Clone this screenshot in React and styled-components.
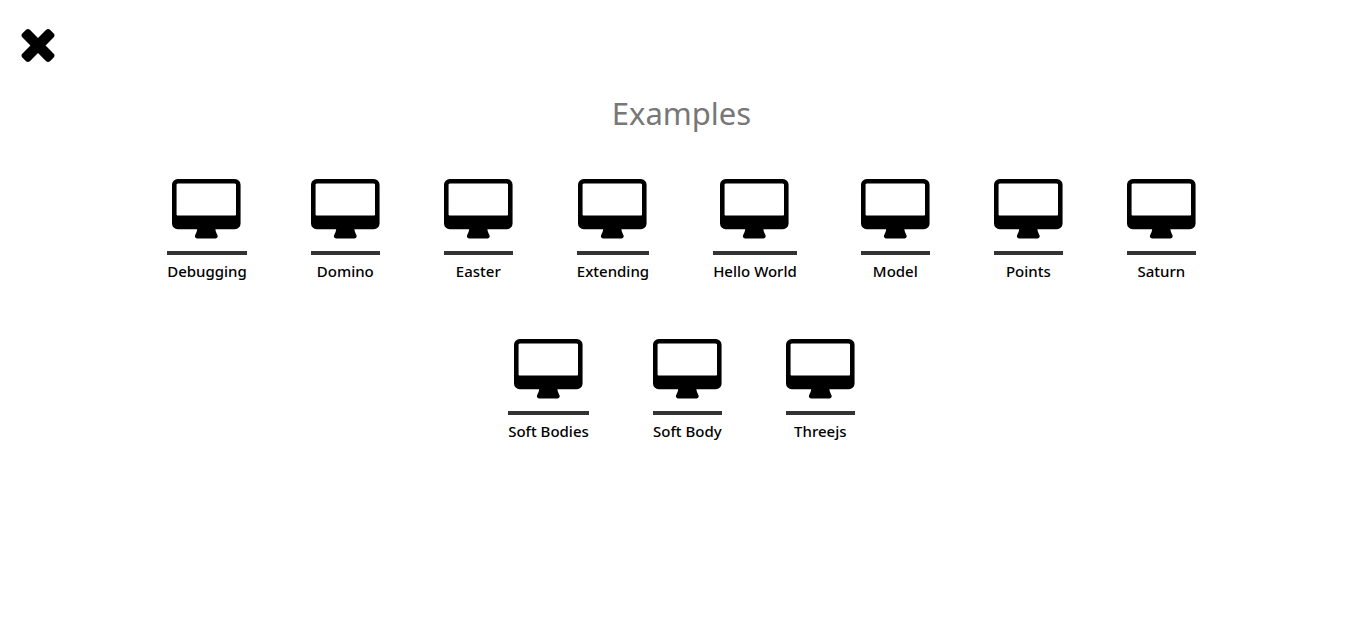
import React from 'react';
import styled, { createGlobalStyle } from 'styled-components';

const examples = [
  'Debugging',
  'Domino',
  'Easter',
  'Extending',
  'Hello World',
  'Model',
  'Points',
  'Saturn',
  'Soft Bodies',
  'Soft Body',
  'Threejs',
];

const GlobalStyle = createGlobalStyle`
  *, *::before, *::after { box-sizing: border-box; }
  body {
    margin: 0;
    background: #fff;
    color: #000;
    font-family: "Noto Sans", "Open Sans", sans-serif;
  }
`;

const Header = styled.header`
  display: flex;
  padding: 29px 21px 0;
`;

const CloseButton = styled.button`
  display: flex;
  padding: 0;
  border: 0;
  background: none;
  color: inherit;
  cursor: pointer;
`;

const CloseIcon = styled.svg`
  width: 34px;
  height: 33px;
  fill: currentColor;
`;

const Title = styled.h1`
  margin: 31px 0 46px;
  color: #777;
  font-size: 31px;
  font-weight: 400;
  line-height: 40px;
  text-align: center;
`;

const Gallery = styled.ul`
  display: flex;
  flex-wrap: wrap;
  justify-content: center;
  gap: 56px 64px;
  max-width: 1120px;
  margin: 0 auto;
  padding: 0 0 56px;
  list-style: none;
`;

const ExampleLink = styled.a`
  display: flex;
  flex-direction: column;
  align-items: center;
  color: inherit;
  text-decoration: none;
`;

const DesktopIcon = styled.svg`
  width: 69px;
  height: 60px;
  fill: currentColor;
`;

const Label = styled.span`
  align-self: stretch;
  margin-top: 12px;
  padding-top: 4px;
  border-top: 4px solid #333;
  font-size: 15px;
  font-weight: 500;
  line-height: 24px;
  text-align: center;
  white-space: nowrap;
`;

function Example({ name }) {
  return (
    <li>
      <ExampleLink href={`#${name.toLowerCase().replace(' ', '-')}`}>
        <DesktopIcon viewBox="0 0 1932 1680" aria-hidden="true">
          <path d="M1792 992v-832q0-13-9.5-22.5t-22.5-9.5h-1600q-13 0-22.5 9.5t-9.5 22.5v832q0 13 9.5 22.5t22.5 9.5h1600q13 0 22.5-9.5t9.5-22.5zM1920 160v1088q0 66-47 113t-113 47h-544q0 37 16 77.5t32 71 16 43.5q0 26-19 45t-45 19h-512q-26 0-45-19t-19-45q0-14 16-44t32-70 16-78h-544q-66 0-113-47t-47-113v-1088q0-66 47-113t113-47h1600q66 0 113 47t47 113z" />
        </DesktopIcon>
        <Label>{name}</Label>
      </ExampleLink>
    </li>
  );
}

export default function App() {
  return (
    <>
      <GlobalStyle />
      <Header>
        <CloseButton type="button" aria-label="Close">
          <CloseIcon viewBox="284 366 1224 1188" aria-hidden="true">
            <path d="M1490 1322q0 40-28 68l-136 136q-28 28-68 28t-68-28l-294-294-294 294q-28 28-68 28t-68-28l-136-136q-28-28-28-68t28-68l294-294-294-294q-28-28-28-68t28-68l136-136q28-28 68-28t68 28l294 294 294-294q28-28 68-28t68 28l136 136q28 28 28 68t-28 68l-294 294 294 294q28 28 28 68z" />
          </CloseIcon>
        </CloseButton>
      </Header>
      <main>
        <Title>Examples</Title>
        <Gallery>
          {examples.map((name) => (
            <Example key={name} name={name} />
          ))}
        </Gallery>
      </main>
    </>
  );
}
